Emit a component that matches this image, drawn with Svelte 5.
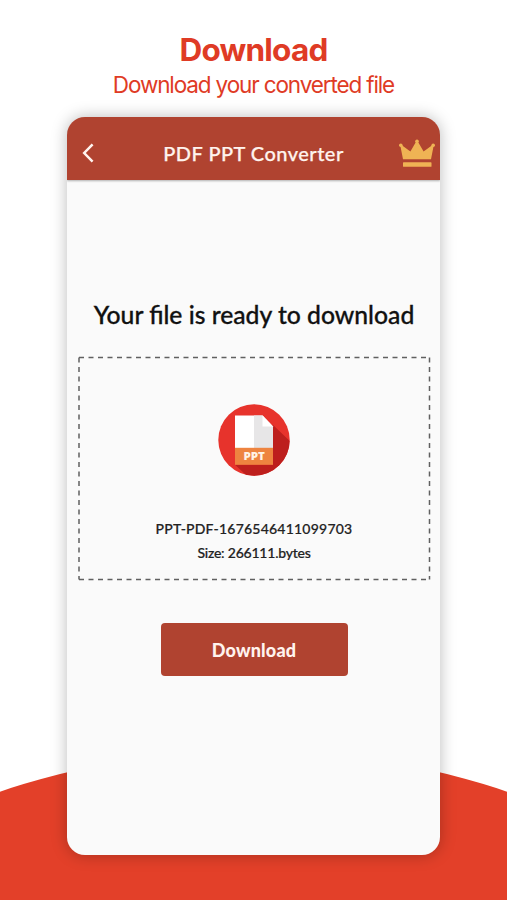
<script>
  const title = 'Download';
  const subtitle = 'Download your converted file';

  const file = {
    name: 'PPT-PDF-1676546411099703',
    size: '266111.bytes'
  };
</script>

<div class="promo">
  <svg class="hill" viewBox="0 0 507 150" aria-hidden="true">
    <circle cx="253.5" cy="792" r="792" fill="#e34029" />
  </svg>

  <header class="intro">
    <h1>{title}</h1>
    <p>{subtitle}</p>
  </header>

  <main class="phone">
    <nav class="bar">
      <button class="back" aria-label="Back">
        <svg width="12" height="20" viewBox="0 0 12 20">
          <path d="M10.6 1.4 L2.2 10 L10.6 18.6" fill="none" stroke="#fff3ee" stroke-width="2.5" />
        </svg>
      </button>
      <h2>PDF PPT Converter</h2>
      <svg class="crown" width="36" height="29" viewBox="0 0 36 29" fill="#efb354">
        <path d="M4 20.2 L1.3 6.6 L3.2 6.6 L11.4 12.4 L17.2 2.4 H18.8 L24.6 12.4 L32.8 6.6 L34.7 6.6 L32 20.2 Z" />
        <circle cx="1.8" cy="6.3" r="1.8" />
        <circle cx="18" cy="2.2" r="1.8" />
        <circle cx="34.2" cy="6.3" r="1.8" />
        <rect x="4" y="23.3" width="28.5" height="4.5" rx="0.6" />
      </svg>
    </nav>

    <section class="content">
      <h3>Your file is ready to download</h3>

      <div class="file">
        <svg class="dashes" width="353" height="225" viewBox="0 0 353 225" aria-hidden="true">
          <path
            d="M1 1.5 H351.5 M351.5 1.5 V223.5 M1 223.5 H351.5 M1 1.5 V223.5"
            fill="none"
            stroke="#606060"
            stroke-width="1.5"
            stroke-dasharray="5 4.5"
          />
        </svg>

        <svg class="icon" width="72" height="72" viewBox="0 0 72 72">
          <defs>
            <clipPath id="disc"><circle cx="36" cy="36" r="35.7" /></clipPath>
          </defs>
          <circle cx="36" cy="36" r="35.7" fill="#e7332c" />
          <path d="M54.5 20.5 L82 47 L54 76 L28 71 L17 60.8 H55 Z" fill="#bd1f1d" clip-path="url(#disc)" />
          <path d="M17 11.5 H44.5 L55 22.5 V45 H17 Z" fill="#fff" />
          <path d="M36 11.5 H44.5 L55 22.5 V45 H36 Z" fill="#e7e6e7" />
          <path d="M44.5 11.5 V22.5 H55 Z" fill="#fff" />
          <rect x="17" y="43.8" width="38" height="17" fill="#ee8440" />
          <text x="36.2" y="56.3" text-anchor="middle" textLength="21.5" lengthAdjust="spacingAndGlyphs">PPT</text>
        </svg>

        <p class="name">{file.name}</p>
        <p class="size">Size: {file.size}</p>
      </div>

      <button class="download">Download</button>
    </section>
  </main>
</div>

<style>
  :global(body) {
    margin: 0;
    background: #fff;
  }

  .promo {
    position: relative;
    box-sizing: border-box;
    width: 507px;
    height: 900px;
    padding-top: 32px;
    overflow: hidden;
    font-family: Lato, sans-serif;
  }

  .hill {
    position: absolute;
    left: 0;
    bottom: 0;
    width: 507px;
    height: 150px;
  }

  h1, h2, h3, p {
    margin: 0;
    white-space: nowrap;
  }

  button {
    border: none;
    padding: 0;
    font-family: inherit;
    cursor: pointer;
  }

  .intro {
    height: 85px;
    color: #df3b25;
    font-family: Inter, sans-serif;
    text-align: center;
  }

  h1 {
    font-size: 31.5px;
    line-height: 35px;
    font-weight: 700;
    letter-spacing: -0.8px;
  }

  .intro p {
    font-size: 22.5px;
    line-height: 35px;
    letter-spacing: -1.13px;
  }

  .phone {
    position: relative;
    width: 373px;
    height: 738px;
    margin-left: 67px;
    border-radius: 18px;
    background: #fafafa;
    box-shadow: 0 0 16px rgba(0, 0, 0, 0.27);
    overflow: hidden;
  }

  .bar {
    display: flex;
    align-items: center;
    box-sizing: border-box;
    height: 63px;
    padding: 9px 5px 0 15px;
    background: #b04330;
    box-shadow: 0 1px 2px rgba(0, 0, 0, 0.3);
  }

  .back {
    display: flex;
    width: 36px;
    background: none;
  }

  h2 {
    flex: 1;
    margin: 0 5px 0 -5px;
    text-align: center;
    color: #fff3ee;
    font-size: 20px;
    line-height: 28px;
    font-weight: 500;
    letter-spacing: 0.48px;
    -webkit-text-stroke: 0.25px;
  }

  .crown {
    margin-top: 1px;
  }

  .content {
    display: flex;
    flex-direction: column;
    align-items: center;
    padding: 117px 0 0 1px;
  }

  h3 {
    color: #111;
    font-size: 24.7px;
    line-height: 36px;
    font-weight: 500;
    -webkit-text-stroke: 0.3px;
  }

  .file {
    position: relative;
    display: flex;
    flex-direction: column;
    align-items: center;
    box-sizing: border-box;
    width: 353px;
    height: 225px;
    margin-top: 23px;
    padding-top: 48px;
    color: #222;
    font-size: 14px;
    line-height: 24px;
    font-weight: 500;
    -webkit-text-stroke: 0.2px;
  }

  .dashes {
    position: absolute;
    inset: 0;
  }

  .icon text {
    fill: #fff3e6;
    font: 800 10.5px 'Open Sans', sans-serif;
  }

  .name {
    margin-top: 41px;
    letter-spacing: 0.22px;
  }

  .size {
    letter-spacing: -0.22px;
  }

  .download {
    width: 187px;
    height: 53px;
    margin-top: 42px;
    border-radius: 4px;
    background: #b04330;
    color: #fff3ee;
    font-size: 18px;
    font-weight: 900;
    letter-spacing: 0.2px;
  }
</style>
